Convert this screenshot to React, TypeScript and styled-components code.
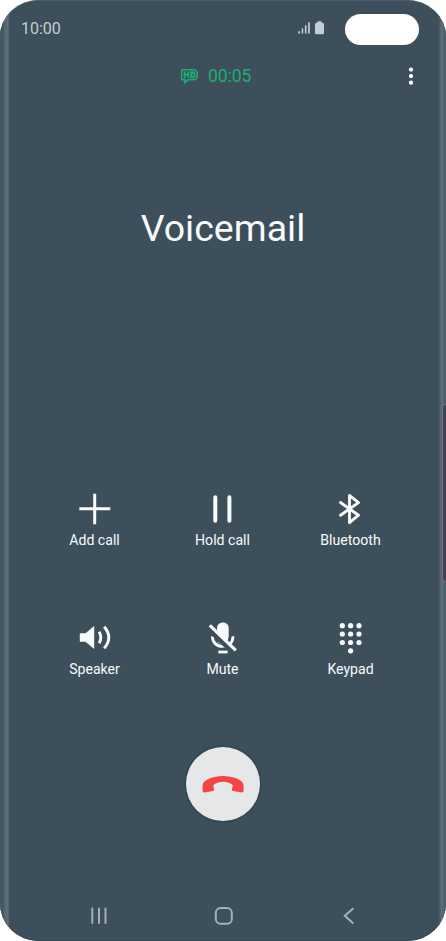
import React from 'react';
import styled, { createGlobalStyle } from 'styled-components';

const GlobalStyle = createGlobalStyle`
  * { box-sizing: border-box; }
  html, body { margin: 0; background: #fff; }
  body { font-family: Roboto, "Liberation Sans", sans-serif; }
`;

const Phone = styled.main`
  position: relative;
  display: flex;
  flex-direction: column;
  width: 446px;
  height: 941px;
  overflow: hidden;
  border-radius: 39px 39px 38px 38px / 37px 37px 38px 38px;
  background: #3c4f5a;
  box-shadow: inset 0 1px 0 #4b5e68, inset 0 -1px 0 #354953;
`;

const Edge = styled.div<{ $side: 'left' | 'right' }>`
  position: absolute;
  top: 0;
  bottom: 0;
  width: 10px;
  ${p => p.$side}: 0;
  background: ${p => p.$side === 'left'
    ? 'linear-gradient(90deg, #465963 0 1px, #3d505c 2px, #445762 3px, #566874 5px, #5c6d79 8px, #485b66 9px, #3c4f5a 10px)'
    : 'linear-gradient(90deg, #3c4f5a 2px, #4b5e69 4px, #5c6b78 5px, #5b6b77 7px, #465a65 9px, #506570 10px)'};
`;

const SideKey = styled.div`
  position: absolute;
  right: 0;
  top: 404px;
  width: 4px;
  height: 178px;
  border: 1px solid #70717f;
  border-right: 0;
  border-radius: 4px 0 0 4px;
  background: #414252;
`;

const StatusBar = styled.header`
  position: relative;
  display: flex;
  align-items: center;
  height: 58px;
  padding: 0 27px 0 21px;
`;

const Clock = styled.time`
  flex: 1;
  color: #c2ced4;
  font-size: 16px;
  line-height: 20px;
  margin-top: -1px;
`;

const StatusIcons = styled.svg`
  width: 28px;
  height: 16px;
  margin: -3px 20px 0 0;
`;

const Camera = styled.div`
  width: 74px;
  height: 31px;
  border-radius: 16px;
  background: #fff;
`;

const CallBar = styled.div`
  display: grid;
  grid-template-columns: 180px 1fr 28px;
  align-items: center;
  height: 36px;
  padding-right: 21px;
`;

const CallTime = styled.div`
  grid-column: 2;
  display: flex;
  align-items: center;
  gap: 9px;
  color: #20ae70;
  font-size: 17.6px;
  line-height: 22px;
  letter-spacing: -0.1px;
`;

const Caller = styled.h1`
  height: 393px;
  margin: 0;
  padding-top: 110px;
  text-align: center;
  color: #f8fafc;
  font-size: 37.5px;
  font-weight: 400;
  line-height: 48px;
`;

const Actions = styled.section`
  display: grid;
  grid-template-columns: repeat(3, 128px);
  grid-template-rows: 129px 131px;
  justify-content: center;
  margin-left: -1px;
`;

const Action = styled.button`
  display: flex;
  flex-direction: column;
  align-items: center;
  padding: 4px 0 0;
  border: 0;
  background: none;
  color: #f8fafc;
  font: 400 14.1px/20px Roboto, "Liberation Sans", sans-serif;
  svg { width: 36px; height: 36px; margin: 0 1px 3px 0; }
`;

const HangUp = styled.button`
  display: grid;
  place-items: center;
  align-self: center;
  width: 74px;
  height: 74px;
  padding: 0;
  border: 0;
  border-radius: 50%;
  background: #e6e7e9;
  box-shadow: 0 0 0 2px #364852;
  svg { width: 42px; height: 18px; }
`;

const NavBar = styled.nav`
  display: grid;
  grid-template-columns: repeat(3, 125px);
  justify-content: center;
  margin: 83px 0 0 1px;
  svg { width: 24px; height: 24px; justify-self: center; }
`;

const HdIcon = () => (
  <svg width="19" height="17" viewBox="0 0 19 17" fill="none" stroke="#20ae70">
    <path d="M3 1.8h10q4.4 0 4.4 5t-4.4 5H8.2L5 14.8v-3H3q-1.4 0-1.4-1.4V3.2Q1.6 1.8 3 1.8Z" strokeWidth="1.5" />
    <path d="M4.6 3.4v6.8M8.4 3.4v6.8M4.6 6.8h3.8M11.3 4.3h.8q2.6 0 2.6 2.5t-2.6 2.5h-.8Z" strokeWidth="1.9" />
  </svg>
);

const icons = {
  add: <path d="M18.2 2.7v30.6M2.8 17.7h31" stroke="currentColor" strokeWidth="3" />,
  hold: <path d="M10.8 6.2v23.6M24.9 6.2v23.6" stroke="currentColor" strokeWidth="4" strokeLinecap="round" />,
  bluetooth: <path d="m8 11.5 18 12.7-9 7.4V4.4l9 7.2L8 24.2" fill="none" stroke="currentColor" strokeWidth="2.9" strokeLinejoin="round" strokeLinecap="round" />,
  speaker: <g fill="none" stroke="currentColor" strokeWidth="2.9">
    <path d="M3.8 13.3H9L17.4 6.3q.3-.2.3.3v21.8q0 .5-.3.3L9 21.7H3.8q-.5 0-.5-.7v-7q0-.7.5-.7Z" fill="currentColor" stroke="none" />
    <path d="M22.6 11.7q3.4 5.8 0 11.6M27.7 6.7q9.2 10.8 0 21.6" />
  </g>,
  mute: <g fill="none" stroke="currentColor" strokeWidth="2.8">
    <rect x="12.6" y="2.4" width="11.6" height="21.6" rx="5.2" fill="currentColor" stroke="none" />
    <path d="M7.9 16.2c0 6.2 4.2 10.2 10.4 10.2s10.2-4 10.2-10.2" />
    <path d="m3.2 8.5 27 25.3" stroke="#3c4f5a" strokeWidth="4.8" />
    <path d="m26.2 15 -3.2 8" stroke="#3c4f5a" strokeWidth="1.8" />
    <path d="m5.3 5.3 26 25" strokeWidth="3.2" />
    <path d="M13.8 32h9.3" />
  </g>,
  keypad: <g fill="currentColor">
    {[5.7, 14, 22.5].flatMap(y => [9.8, 18.1, 26.5].map(x => <circle key={`${x}-${y}`} cx={x} cy={y} r="2.6" />))}
    <circle cx="18.1" cy="30.8" r="2.6" />
  </g>,
};

const actions: { icon: keyof typeof icons; label: string }[] = [
  { icon: 'add', label: 'Add call' },
  { icon: 'hold', label: 'Hold call' },
  { icon: 'bluetooth', label: 'Bluetooth' },
  { icon: 'speaker', label: 'Speaker' },
  { icon: 'mute', label: 'Mute' },
  { icon: 'keypad', label: 'Keypad' },
];

export default function App() {
  return (
    <>
      <GlobalStyle />
      <Phone>
        <Edge $side="left" />
        <Edge $side="right" />
        <SideKey />
        <StatusBar>
          <Clock>10:00</Clock>
          <StatusIcons viewBox="0 0 28 16" fill="#c2ced4">
            <path d="M1.2 11.2H3v2.3H1.2zM4.7 8.2h1.5v5.3H4.7zM7.9 5.2h1.6v8.3H7.9zM11.1 2.2h1.7v11.3h-1.7zM20.5 1.2h4v1.5h1Q27 2.7 27 4.2v8.8q0 1.3-1.4 1.3h-6.2q-1.4 0-1.4-1.3V4.2q0-1.5 1.5-1.5h1z" />
          </StatusIcons>
          <Camera />
        </StatusBar>
        <CallBar>
          <CallTime><HdIcon />00:05</CallTime>
          <svg width="28" height="24" viewBox="0 0 28 24" fill="#fff">
            <circle cx="14" cy="5.6" r="2.15" />
            <circle cx="14" cy="12.1" r="2.15" />
            <circle cx="14" cy="18.7" r="2.15" />
          </svg>
        </CallBar>
        <Caller>Voicemail</Caller>
        <Actions>
          {actions.map(({ icon, label }) => (
            <Action key={label}>
              <svg viewBox="-.5 0 36 36">{icons[icon]}</svg>
              {label}
            </Action>
          ))}
        </Actions>
        <HangUp aria-label="End call">
          <svg viewBox="0 0 42 18" fill="#f54444">
            <path d="M.6 15.8v-5.2C.6 4.5 11.5.9 21 .9s20.6 3.6 20.6 9.7v5.2q0 1.8-1.8 1.6l-8.7-1.3q-1.5-.3-1.2-1.7l.9-4.1C27 5.4 15.6 5.4 11.2 10.3l.9 4.1q.3 1.4-1.2 1.7l-8.5 1.3Q.6 17.6.6 15.8Z" />
          </svg>
        </HangUp>
        <NavBar>
          <svg viewBox="0 0 24 24" stroke="#a5b1b8" strokeWidth="2" strokeLinecap="round"><path d="M5.3 4.6v14.5M12 4.6v14.5M18.5 4.6v14.5" /></svg>
          <svg viewBox="0 0 24 24" stroke="#a5b1b8" strokeWidth="2" fill="none"><rect x="3.8" y="4" width="16" height="15.8" rx="4.8" /></svg>
          <svg viewBox="0 0 24 24" stroke="#a5b1b8" strokeWidth="2" fill="none" strokeLinecap="round"><path d="m15.8 4.7-8 7.1 8 7.1" /></svg>
        </NavBar>
      </Phone>
    </>
  );
}
